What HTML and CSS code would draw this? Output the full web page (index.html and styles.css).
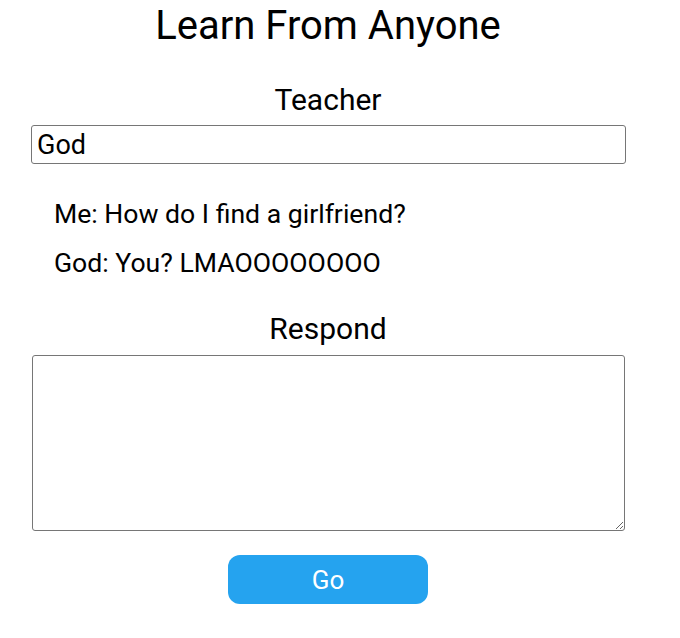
FILE: index.html
```html
<!DOCTYPE html>
<html lang="en">
<head>
<meta charset="utf-8">
<title>Learn From Anyone</title>
<link rel="stylesheet" href="styles.css">
</head>
<body>
<main class="app">
  <h1 class="title">Learn From Anyone</h1>
  <label class="label" for="teacher">Teacher</label>
  <input class="teacher-input" id="teacher" type="text" value="God">
  <div class="chat">
    <p class="msg">Me: How do I find a girlfriend?</p>
    <p class="msg">God: You? LMAOOOOOOOO</p>
  </div>
  <label class="label label-respond" for="reply">Respond</label>
  <textarea class="reply" id="reply"></textarea>
  <button class="go" type="button">Go</button>
</main>
</body>
</html>
```
FILE: styles.css
```css
html, body {
  margin: 0;
  padding: 0;
  background: #fff;
}

body {
  font-family: Roboto, "Noto Sans", sans-serif;
  color: #000;
}

.app {
  width: 640px;
  margin-left: 8px;
  display: flex;
  flex-direction: column;
  align-items: center;
}

.title {
  margin: 4px 0 0;
  font-size: 40px;
  font-weight: 400;
  line-height: 44px;
}

.label {
  display: block;
  margin-top: 36px;
  font-size: 30px;
  line-height: 32px;
}

.teacher-input {
  box-sizing: border-box;
  align-self: flex-start;
  margin: 9px 0 0 23px;
  width: 595px;
  height: 39px;
  padding: 0 5px;
  border: 1px solid #767676;
  border-radius: 3px;
  font-family: inherit;
  font-size: 27px;
  color: #000;
}

.chat {
  align-self: stretch;
  padding: 35px 0 0 46px;
}

.msg {
  margin: 0 0 19px;
  font-size: 26.6px;
  line-height: 30px;
}

.msg:last-child {
  margin-bottom: 0;
}

.label-respond {
  margin-top: 35px;
}

.reply {
  box-sizing: border-box;
  align-self: flex-start;
  margin: 10px 0 0 24px;
  width: 593px;
  height: 176px;
  border: 1px solid #767676;
  border-radius: 3px;
  font-family: inherit;
  font-size: 20px;
}

.go {
  margin-top: 24px;
  width: 200px;
  height: 49px;
  border: none;
  border-radius: 12px;
  background: #25a3ef;
  color: #fff;
  font-family: inherit;
  font-size: 26px;
}
```
